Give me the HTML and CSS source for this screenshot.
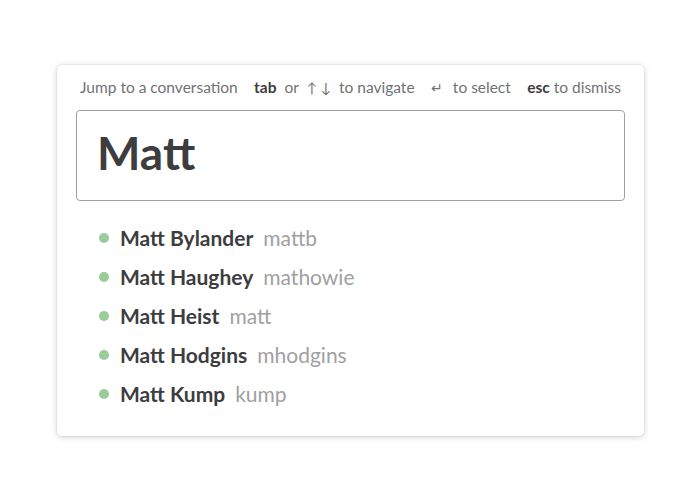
FILE: index.html
```html
<!DOCTYPE html>
<html>
<head>
<meta charset="utf-8">
<link rel="stylesheet" href="styles.css">
</head>
<body>
<div class="page">
  <div class="card">
    <div class="hints">
      <span class="hint">Jump to a conversation</span>
      <span class="hint"><b>tab</b>&nbsp; or &nbsp;<span class="arrow">↑ ↓</span>&nbsp; to navigate</span>
      <span class="hint"><span class="enter">↵</span> to select</span>
      <span class="hint"><b>esc</b> to dismiss</span>
    </div>
    <div class="input">Matt</div>
    <ul class="results">
      <li><span class="dot"></span><span class="name">Matt Bylander</span><span class="handle">mattb</span></li>
      <li><span class="dot"></span><span class="name">Matt Haughey</span><span class="handle">mathowie</span></li>
      <li><span class="dot"></span><span class="name">Matt Heist</span><span class="handle">matt</span></li>
      <li><span class="dot"></span><span class="name">Matt Hodgins</span><span class="handle">mhodgins</span></li>
      <li><span class="dot"></span><span class="name">Matt Kump</span><span class="handle">kump</span></li>
    </ul>
  </div>
</div>
</body>
</html>
```
FILE: styles.css
```css
html, body {
  margin: 0;
  padding: 0;
  background: #ffffff;
  font-family: Lato, "Open Sans", sans-serif;
}
.page {
  width: 700px;
  height: 500px;
  padding: 65px 0 0 57px;
  box-sizing: border-box;
}
.card {
  width: 587px;
  height: 371px;
  box-sizing: border-box;
  background: #fff;
  border-radius: 5px;
  box-shadow: 0 1px 6px rgba(0,0,0,0.18), 0 0 2px rgba(0,0,0,0.12);
  padding: 12px 19px 0 19px;
}
.hints {
  display: flex;
  justify-content: space-between;
  font-size: 15.5px;
  color: #717274;
  line-height: 20px;
  padding: 0 4px 0 4px;
  white-space: nowrap;
}
.hints b {
  color: #3d3d3f;
  font-weight: 700;
}
.arrow {
  font-size: 14px;
}
.enter {
  display: inline-block;
  margin-right: 6px;
  font-size: 14px;
}
.input {
  margin-top: 12px;
  height: 91px;
  box-sizing: border-box;
  border: 1px solid #a0a0a2;
  border-radius: 4px;
  padding: 12px 0 0 20px;
  font-size: 46px;
  font-weight: 700;
  color: #3d3d3f;
  line-height: 60px;
}
.results {
  list-style: none;
  margin: 17px 0 0 0;
  padding: 0 0 0 23px;
}
.results li {
  display: flex;
  align-items: center;
  height: 39px;
  font-size: 21px;
}
.dot {
  width: 10px;
  height: 10px;
  border-radius: 50%;
  background: #9acc9a;
  margin-right: 11px;
}
.name {
  font-weight: 700;
  color: #3d3d3f;
}
.handle {
  margin-left: 10px;
  color: #a0a0a2;
}
```
